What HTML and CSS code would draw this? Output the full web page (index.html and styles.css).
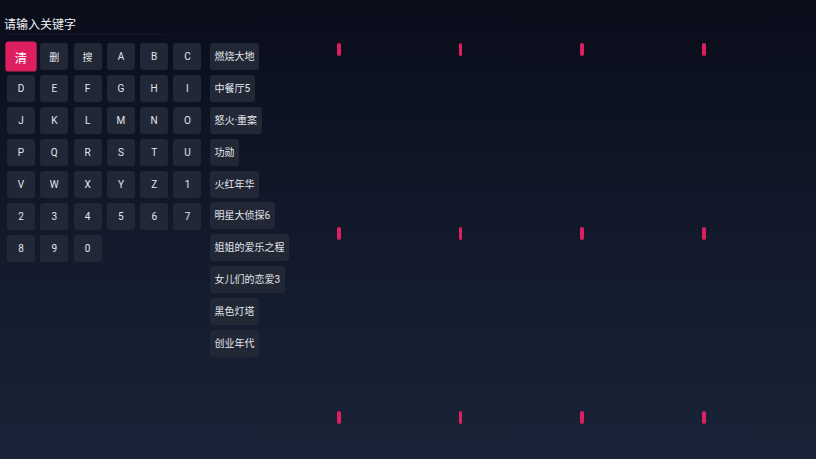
FILE: index.html
```html
<!DOCTYPE html>
<html lang="zh">
  <head>
    <meta charset="UTF-8" />
    <meta name="viewport" content="width=device-width, initial-scale=1.0" />
    <title>搜索</title>
    <link rel="stylesheet" href="styles.css">
  </head>
  <body>
    <div class="page">
      <div class="left">
        <h2 class="title">请输入关键字</h2>
        <div class="search-body">
          <div class="keyboard">
            <div class="key active">清</div>
            <div class="key">删</div>
            <div class="key">搜</div>
            <div class="key">A</div>
            <div class="key">B</div>
            <div class="key">C</div>
            <div class="key">D</div>
            <div class="key">E</div>
            <div class="key">F</div>
            <div class="key">G</div>
            <div class="key">H</div>
            <div class="key">I</div>
            <div class="key">J</div>
            <div class="key">K</div>
            <div class="key">L</div>
            <div class="key">M</div>
            <div class="key">N</div>
            <div class="key">O</div>
            <div class="key">P</div>
            <div class="key">Q</div>
            <div class="key">R</div>
            <div class="key">S</div>
            <div class="key">T</div>
            <div class="key">U</div>
            <div class="key">V</div>
            <div class="key">W</div>
            <div class="key">X</div>
            <div class="key">Y</div>
            <div class="key">Z</div>
            <div class="key">1</div>
            <div class="key">2</div>
            <div class="key">3</div>
            <div class="key">4</div>
            <div class="key">5</div>
            <div class="key">6</div>
            <div class="key">7</div>
            <div class="key">8</div>
            <div class="key">9</div>
            <div class="key">0</div>
          </div>
          <div class="hot-list">
            <div class="hot-item">燃烧大地</div>
            <div class="hot-item">中餐厅5</div>
            <div class="hot-item">怒火·重案</div>
            <div class="hot-item">功勋</div>
            <div class="hot-item">火红年华</div>
            <div class="hot-item">明星大侦探6</div>
            <div class="hot-item">姐姐的爱乐之程</div>
            <div class="hot-item">女儿们的恋爱3</div>
            <div class="hot-item">黑色灯塔</div>
            <div class="hot-item">创业年代</div>
          </div>
        </div>
      </div>

      <div class="results">
        <div class="card"><span class="loading"></span></div>
        <div class="card"><span class="loading"></span></div>
        <div class="card"><span class="loading"></span></div>
        <div class="card"><span class="loading"></span></div>
        <div class="card"><span class="loading"></span></div>
        <div class="card"><span class="loading"></span></div>
        <div class="card"><span class="loading"></span></div>
        <div class="card"><span class="loading"></span></div>
        <div class="card"><span class="loading"></span></div>
        <div class="card"><span class="loading"></span></div>
        <div class="card"><span class="loading"></span></div>
        <div class="card"><span class="loading"></span></div>
      </div>
    </div>
  </body>
</html>
```

FILE: styles.css
```css
html {
  box-sizing: border-box;
  font-size: 12px;
}

*,
*:before,
*:after {
  box-sizing: inherit;
}

body,
h2 {
  margin: 0;
  padding: 0;
  font-weight: normal;
}

body {
  width: 816px;
  height: 459px;
  overflow: hidden;
  font-family: Roboto, "Noto Sans CJK SC", sans-serif;
  color: #e6e8ee;
  background: linear-gradient(180deg, #0a0d1a 0%, #121a2c 55%, #1a2337 100%);
}

.page {
  display: flex;
  height: 459px;
  overflow: hidden;
}

.left {
  width: 322px;
  display: flex;
  flex-direction: column;
}

.title {
  margin: 16px 0 0 4px;
  width: 163px;
  font-size: 12px;
  line-height: 18px;
  height: 19px;
  border-bottom: 1px solid #131827;
  color: #f0f1f5;
}

.search-body {
  display: flex;
  gap: 8.5px;
  padding: 8px 0 0 7px;
}

.keyboard {
  display: grid;
  grid-template-columns: repeat(6, 28px);
  grid-auto-rows: 27px;
  column-gap: 5.3px;
  row-gap: 5px;
  align-content: start;
}

.key {
  display: flex;
  align-items: center;
  justify-content: center;
  background: #222736;
  border-radius: 3px;
  font-size: 10px;
  color: #e4e6ec;
}

.key.active {
  background: #dd1f5f;
  color: #fff;
  font-size: 11px;
  transform: scale(1.12);
}

.hot-list {
  display: flex;
  flex-direction: column;
  align-items: start;
  gap: 4.9px;
}

.hot-item {
  height: 27px;
  line-height: 27px;
  padding: 0 4.5px;
  background: #222736;
  border-radius: 3px;
  font-size: 10px;
  color: #e4e6ec;
  white-space: nowrap;
}

.results {
  display: grid;
  grid-template-columns: repeat(4, 121.7px);
  grid-template-rows: repeat(3, 184px);
  padding-top: 43px;
  height: 459px;
  overflow: hidden;
}

.card {
  padding-left: 15px;
}

.loading {
  display: block;
  width: 3.5px;
  height: 13px;
  border-radius: 2px;
  background: #dd1f5f;
}
```
